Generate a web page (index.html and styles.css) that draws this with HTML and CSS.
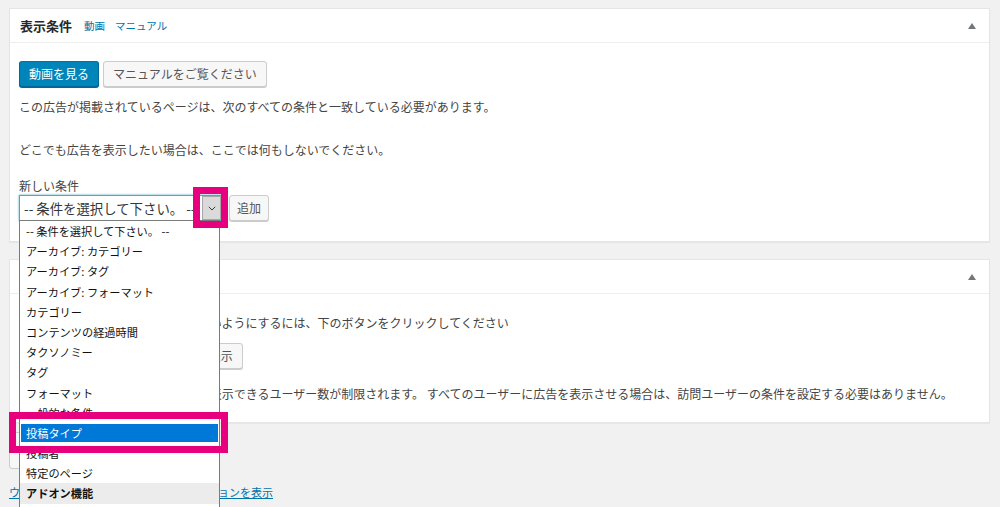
FILE: index.html
```html
<!DOCTYPE html>
<html lang="ja">
<head>
<meta charset="utf-8">
<title>表示条件</title>
<link rel="stylesheet" href="styles.css">
</head>
<body>
<div class="page">
  <section class="box">
    <header class="box-head">
      <h2 class="box-title">表示条件</h2>
      <a class="head-link" href="#">動画</a>
      <a class="head-link" href="#">マニュアル</a>
      <span class="toggle"></span>
    </header>
    <div class="box-body b1">
      <div class="btns">
        <button class="btn primary">動画を見る</button>
        <button class="btn">マニュアルをご覧ください</button>
      </div>
      <p class="text t1">この広告が掲載されているページは、次のすべての条件と一致している必要があります。</p>
      <p class="text t2">どこでも広告を表示したい場合は、ここでは何もしないでください。</p>
      <div class="label">新しい条件</div>
      <div class="row">
        <div class="select">
          <span class="sel-text">-- 条件を選択して下さい。 --</span>
          <span class="sel-arrow"><svg width="8" height="5" viewBox="0 0 8 5"><path d="M0.8 0.8L4 4L7.2 0.8" fill="none" stroke="#3a3a3a" stroke-width="1"/></svg></span>
          <ul class="list">
            <li>-- 条件を選択して下さい。 --</li>
            <li>アーカイブ: カテゴリー</li>
            <li>アーカイブ: タグ</li>
            <li>アーカイブ: フォーマット</li>
            <li>カテゴリー</li>
            <li>コンテンツの経過時間</li>
            <li>タクソノミー</li>
            <li>タグ</li>
            <li>フォーマット</li>
            <li>一般的な条件</li>
            <li class="sel">投稿タイプ</li>
            <li>投稿者</li>
            <li>特定のページ</li>
            <li class="grp">アドオン機能</li>
          </ul>
        </div>
        <button class="btn add">追加</button>
      </div>
    </div>
  </section>

  <section class="box box2">
    <header class="box-head">
      <h2 class="box-title">訪問ユーザーの条件</h2>
      <span class="toggle"></span>
    </header>
    <div class="box-body b2">
      <p class="text">広告をすべての訪問者には表示しないようにするには、下のボタンをクリックしてください</p>
      <button class="btn show">訪問ユーザーの条件オプションを表示</button>
      <p class="text t3">訪問ユーザーの条件によって広告を表示できるユーザー数が制限されます。 すべてのユーザーに広告を表示させる場合は、訪問ユーザーの条件を設定する必要はありません。</p>
    </div>
  </section>

  <div class="stub"></div>
  <a class="foot-link" href="#">ウィジェットとショートコードの全オプションを表示</a>

  <span class="mark mark-arrow"></span>
  <span class="mark mark-item"></span>
</div>
</body>
</html>
```

FILE: styles.css
```css
html, body {
  margin: 0;
  height: 507px;
  overflow: hidden;
}

body {
  background: #f1f1f1;
  font-family: "Noto Sans CJK JP", "Noto Sans", "Liberation Sans", sans-serif;
  color: #444;
}

.page {
  position: relative;
  padding: 8px 10px 0 9px;
}

.box {
  width: 981px;
  box-sizing: border-box;
  background: #fff;
  border: 1px solid #e5e5e5;
  box-shadow: 0 1px 1px rgba(0, 0, 0, 0.04);
}

.box2 {
  margin-top: 17px;
}

.box-head {
  display: flex;
  align-items: center;
  height: 33px;
  padding: 0 13px 0 10px;
  border-bottom: 1px solid #eee;
}

.box-title {
  margin: 0;
  font-size: 13px;
  font-weight: bold;
  line-height: 33px;
  color: #23282d;
}

.head-link {
  font-size: 10.5px;
  color: #0073aa;
  text-decoration: none;
  margin-left: 12px;
}

.head-link + .head-link {
  margin-left: 10px;
}

.toggle {
  margin-left: auto;
  width: 0;
  height: 0;
  border-left: 4px solid transparent;
  border-right: 4px solid transparent;
  border-bottom: 6px solid #72777c;
}

.box-body {
  padding: 18px 9px 20px;
}

.b2 {
  padding: 19px 9px 18px;
}

.btns {
  display: flex;
  gap: 4px;
}

.btn {
  font-family: inherit;
  font-size: 12px;
  height: 26px;
  line-height: 24px;
  padding: 0 9px;
  margin: 0;
  box-sizing: border-box;
  border: 1px solid #ccc;
  border-radius: 3px;
  background: #f7f7f7;
  color: #555;
  box-shadow: 0 1px 0 #ccc;
  white-space: nowrap;
}

.btn.primary {
  background: #0085ba;
  border-color: #0073aa #006799 #006799;
  color: #fff;
  box-shadow: 0 1px 0 #006799;
}

.btn.add {
  padding: 0 7px;
}

.btn.show {
  display: block;
  margin-top: 10px;
}

.text {
  margin: 0;
  font-size: 12px;
  line-height: 20px;
  color: #444;
  white-space: nowrap;
}

.t1 {
  margin-top: 10px;
}

.t2 {
  margin-top: 23px;
}

.t3 {
  margin-top: 15px;
}

.label {
  margin-top: 17px;
  font-size: 12px;
  line-height: 18px;
  color: #444;
}

.row {
  display: flex;
  align-items: flex-start;
  gap: 7px;
}

.select {
  position: relative;
  display: flex;
  width: 203px;
  height: 26px;
  box-sizing: border-box;
  border: 1px solid #5b9dd9;
  box-shadow: 0 0 2px rgba(30, 140, 190, 0.8);
  background: #fff;
}

.sel-text {
  flex: 1;
  overflow: hidden;
  white-space: nowrap;
  font-size: 13.4px;
  line-height: 24px;
  padding-left: 4px;
  color: #32373c;
}

.sel-arrow {
  width: 19px;
  height: 24px;
  box-sizing: border-box;
  background: #dadada;
  border: 1px solid #a6a6a6;
  display: flex;
  align-items: center;
  justify-content: center;
}

.list {
  position: absolute;
  left: -1px;
  top: 100%;
  z-index: 10;
  width: 201px;
  height: 290px;
  box-sizing: border-box;
  margin: 0;
  padding: 0;
  list-style: none;
  background: #fff;
  border: 1px solid #7a7a7a;
}

.list li {
  height: 20.2px;
  line-height: 20.2px;
  padding-left: 6px;
  font-size: 11.2px;
  color: #111;
  white-space: nowrap;
}

.list li.sel {
  background: #0078d7;
  color: #fff;
  box-shadow: inset 0 0 0 1px #fff;
}

.list li.grp {
  background: #ececec;
  font-weight: bold;
}

.stub {
  margin-top: 9px;
  width: 150px;
  height: 37px;
  box-sizing: border-box;
  border: 1px solid #ccc;
  border-radius: 3px;
  background: #f7f7f7;
}

.foot-link {
  display: inline-block;
  margin-top: 13px;
  font-size: 11px;
  line-height: 20px;
  color: #0073aa;
  text-decoration: underline;
}

.mark {
  position: absolute;
  z-index: 20;
  box-sizing: border-box;
  border: 7px solid #e6007e;
}

.mark-arrow {
  left: 193px;
  top: 187px;
  width: 35px;
  height: 41px;
}

.mark-item {
  left: 9px;
  top: 412px;
  width: 219px;
  height: 41px;
}
```
